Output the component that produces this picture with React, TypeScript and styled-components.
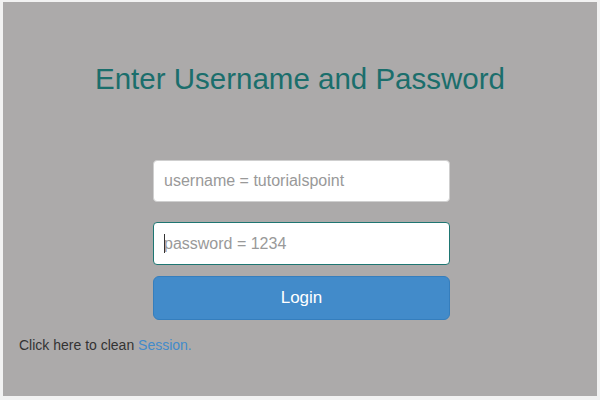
import React from 'react';
import styled, { createGlobalStyle } from 'styled-components';

const GlobalStyle = createGlobalStyle`
  html, body {
    margin: 0;
    padding: 0;
    background: #f2f2f2;
  }
  * {
    box-sizing: border-box;
  }
`;

const Page = styled.div`
  margin: 2px 3px 0 3px;
  height: 394px;
  background-color: #acaaaa;
  padding: 60px 16px 0 16px;
  font-family: 'Liberation Sans', Arial, sans-serif;
`;

const Title = styled.h2`
  margin: 0;
  text-align: center;
  font-size: 29.5px;
  font-weight: 400;
  line-height: 33px;
  color: #1b6e6c;
`;

const Form = styled.form`
  width: 297px;
  margin: 65px 0 0 calc(50% - 147px);
  display: flex;
  flex-direction: column;
`;

const Field = styled.div<{ gap: number }>`
  position: relative;
  margin-bottom: ${(props) => props.gap}px;
`;

const Input = styled.input<{ focused?: boolean }>`
  display: block;
  width: 100%;
  height: ${(props) => (props.focused ? 43 : 42)}px;
  padding: 0 10px;
  font-family: inherit;
  font-size: 16px;
  color: #555;
  background: #fff;
  border: 1px solid ${(props) => (props.focused ? '#1e7672' : '#cfcfcf')};
  border-radius: 4px;
  outline: none;

  &::placeholder {
    color: #999;
  }
`;

const Caret = styled.span`
  position: absolute;
  left: 11px;
  top: 12px;
  width: 1px;
  height: 19px;
  background: #333;
`;

const LoginButton = styled.button`
  height: 44px;
  width: 100%;
  border: 1px solid #357ebd;
  border-radius: 6px;
  background-color: #428bca;
  color: #fff;
  font-family: inherit;
  font-size: 17px;
  cursor: pointer;
`;

const Footer = styled.p`
  margin: 15px 0 0 0;
  font-size: 14px;
  line-height: 20px;
  color: #333;
`;

const SessionLink = styled.a`
  color: #428bca;
  text-decoration: none;
`;

const App: React.FC = () => {
  return (
    <>
      <GlobalStyle />
      <Page>
        <Title>Enter Username and Password</Title>
        <Form onSubmit={(e) => e.preventDefault()}>
          <Field gap={20}>
            <Input type="text" placeholder="username = tutorialspoint" />
          </Field>
          <Field gap={11}>
            <Input type="password" placeholder="password = 1234" focused />
            <Caret />
          </Field>
          <LoginButton type="submit">Login</LoginButton>
        </Form>
        <Footer>
          Click here to clean <SessionLink href="#">Session.</SessionLink>
        </Footer>
      </Page>
    </>
  );
};

export default App;
